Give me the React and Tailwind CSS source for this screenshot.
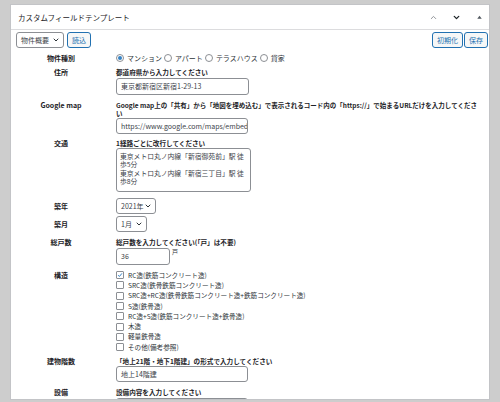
import { ChevronDown, ChevronUp } from 'lucide-react'

const FONT = { fontFamily: '"Noto Sans CJK JP", "Noto Sans", sans-serif' }

const STRUCTURES = [
  { label: 'RC造(鉄筋コンクリート造)', checked: true },
  { label: 'SRC造(鉄骨鉄筋コンクリート造)' },
  { label: 'SRC造+RC造(鉄骨鉄筋コンクリート造+鉄筋コンクリート造)' },
  { label: 'S造(鉄骨造)' },
  { label: 'RC造+S造(鉄筋コンクリート造+鉄骨造)' },
  { label: '木造' },
  { label: '軽量鉄骨造' },
  { label: 'その他(備考参照)' },
]

const RADIOS = ['マンション', 'アパート', 'テラスハウス', '貸家']

function Row({ label, labelH = 9, className = '', children }) {
  return (
    <div className={`flex ${className}`}>
      <div
        className="flex w-[100px] shrink-0 items-center justify-center font-semibold text-[#1d2327]"
        style={{ height: labelH }}
      >
        {label}
      </div>
      <div className="ml-[5px] min-w-0 flex-1">{children}</div>
    </div>
  )
}

function Hint({ children }) {
  return <div className="h-[9px] text-[6.6px] leading-[9px] font-semibold text-[#1d2327] whitespace-nowrap">{children}</div>
}

function Input({ value, className = '' }) {
  return (
    <div
      className={`flex h-[16px] items-center rounded-[3px] border border-[#8c8f94] bg-white px-[4px] text-[#3c434a] whitespace-nowrap overflow-hidden ${className}`}
    >
      {value}
    </div>
  )
}

function Select({ value, className = '' }) {
  return (
    <div
      className={`flex h-[16px] items-center justify-between rounded-[3px] border border-[#8c8f94] bg-white pl-[4px] pr-[3px] text-[#3c434a] ${className}`}
    >
      <span>{value}</span>
      <ChevronDown size={8} strokeWidth={3} className="text-[#2c3338]" />
    </div>
  )
}

export default function App() {
  return (
    <div className="h-[402px] w-[500px] overflow-hidden bg-[#cdcdcd] px-[10px] pt-[4px] text-[7px] leading-[9px]" style={FONT}>
      <div className="h-[396px] overflow-hidden border border-[#c3c4c7] bg-white">
        <div className="flex h-[25px] items-center justify-between border-b border-[#dcdcde] pl-[7px] pr-[5px]">
          <span className="text-[7.5px] text-[#1d2327]">カスタムフィールドテンプレート</span>
          <div className="flex items-center gap-[14px]">
            <ChevronUp size={9} strokeWidth={2.5} className="text-[#8c8f94]" />
            <ChevronDown size={9} strokeWidth={3.5} className="text-[#1d2327]" />
            <svg width="9" height="9" viewBox="0 0 8 8">
              <path d="M4 2.5 L6 5 L2 5 Z" fill="#50575e" />
            </svg>
          </div>
        </div>

        <div className="flex items-start justify-between pl-[5px] pr-[1px] pt-[2px]">
          <div className="flex gap-[3px]">
            <Select value="物件概要" className="w-[48px]" />
            <button className="h-[16px] rounded-[3px] border border-[#2271b1] bg-[#f6f7f7] px-[4px] text-[#2271b1]">
              読込
            </button>
          </div>
          <div className="flex gap-[1px]">
            <button className="h-[16px] w-[31px] rounded-[3px] border border-[#2271b1] bg-[#f6f7f7] text-[#2271b1]">
              初期化
            </button>
            <button className="h-[16px] w-[24px] rounded-[3px] border border-[#2271b1] bg-[#f6f7f7] text-[#2271b1]">
              保存
            </button>
          </div>
        </div>

        <Row label="物件種別" labelH={10} className="mt-[5px]">
          <div className="flex h-[10px] items-center text-[#2c3338]">
            {RADIOS.map((r, i) => (
              <div key={r} className="flex items-center">
                <span className="mr-[3px] flex h-[8px] w-[8px] items-center justify-center rounded-full border border-[#8c8f94] bg-white">
                  {i === 0 && <span className="h-[4px] w-[4px] rounded-full bg-[#3582c4]" />}
                </span>
                <span className="mr-[2px]">{r}</span>
              </div>
            ))}
          </div>
        </Row>

        <Row label="住所" className="mt-[5px]">
          <Hint>都道府県から入力してください</Hint>
          <Input value="東京都新宿区新宿1-29-13" className="mt-[1px] h-[17px] w-[133px]" />
        </Row>

        <Row label="Google map" className="mt-[6px]">
          <div className="text-[6.5px] leading-[8px] font-semibold text-[#1d2327]">
            <div className="whitespace-nowrap">
              Google map上の「共有」から「地図を埋め込む」で表示されるコード内の「https://」で始まるURLだけを入力してくださ
            </div>
            <div>い</div>
          </div>
          <Input value="https://www.google.com/maps/embed" className="mt-[1px] w-[132px]" />
        </Row>

        <Row label="交通" className="mt-[5px]">
          <Hint>1経路ごとに改行してください</Hint>
          <div className="h-[44px] w-[135px] overflow-hidden rounded-[3px] border border-[#8c8f94] bg-white px-[3px] pt-[3px] text-[6.8px] leading-[8.3px] text-[#3c434a]">
            東京メトロ丸ノ内線「新宿御苑前」駅 徒歩5分
            <br />
            東京メトロ丸ノ内線「新宿三丁目」駅 徒歩8分
          </div>
        </Row>

        <Row label="築年" labelH={16} className="mt-[6px]">
          <Select value="2021年" className="w-[40px]" />
        </Row>

        <Row label="築月" labelH={16} className="mt-[2px]">
          <Select value="1月" className="w-[31px]" />
        </Row>

        <Row label="総戸数" className="mt-[6px]">
          <Hint>総戸数を入力してください(「戸」は不要)</Hint>
          <div className="mt-[1px] flex items-start">
            <Input value="36" className="h-[17px] w-[54px]" />
            <span className="ml-[2px] text-[6px] leading-[7px] text-[#2c3338]">戸</span>
          </div>
        </Row>

        <Row label="構造" labelH={10} className="mt-[5px]">
          <div className="flex flex-col">
            {STRUCTURES.map((s) => (
              <div key={s.label} className="flex h-[10.3px] items-center text-[6.6px] text-[#2c3338]">
                <span className="mr-[4px] flex h-[8px] w-[8px] items-center justify-center rounded-[1px] border border-[#8c8f94] bg-white">
                  {s.checked && (
                    <svg width="8" height="8" viewBox="0 0 8 8">
                      <path d="M1.5 4.2 L3.2 6 L6.6 1.8" fill="none" stroke="#3582c4" strokeWidth="1.3" />
                    </svg>
                  )}
                </span>
                <span className="whitespace-nowrap">{s.label}</span>
              </div>
            ))}
          </div>
        </Row>

        <Row label="建物階数" className="mt-[5px]">
          <Hint>「地上21階・地下1階建」の形式で入力してください</Hint>
          <Input value="地上14階建" className="w-[132px]" />
        </Row>

        <Row label="設備" className="mt-[6px]">
          <Hint>設備内容を入力してください</Hint>
          <Input value="エアコン、浴室乾燥機、追焚機能" className="mt-[1px] w-[132px]" />
        </Row>
      </div>
    </div>
  )
}
